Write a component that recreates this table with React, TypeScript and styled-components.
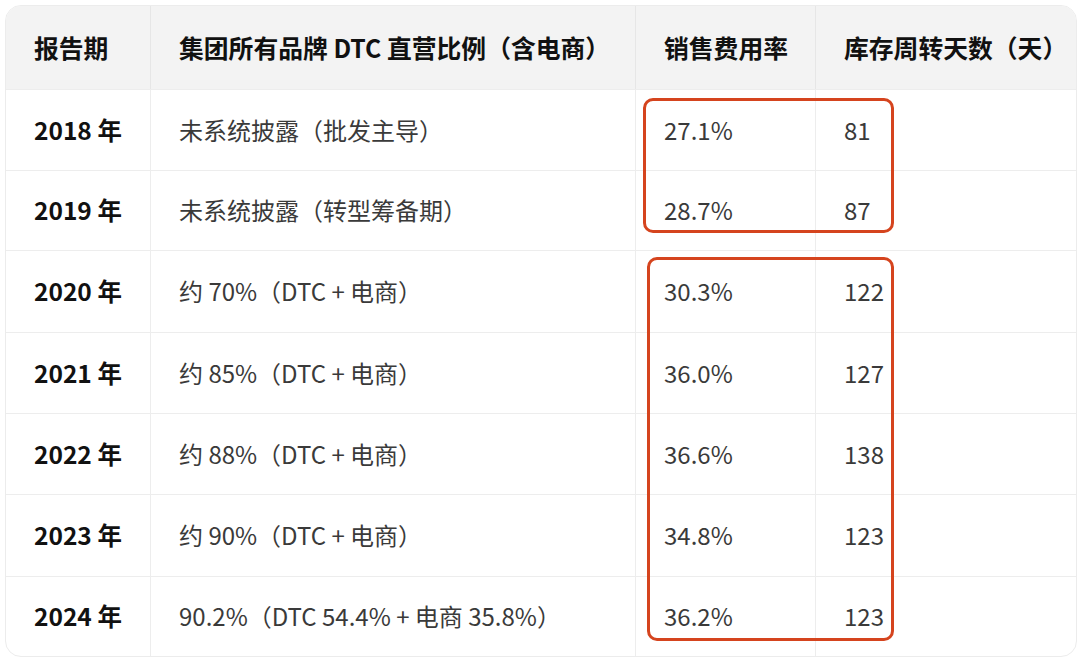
import React from 'react';
import styled, { createGlobalStyle } from 'styled-components';

const GlobalStyle = createGlobalStyle`
  html, body {
    margin: 0;
    padding: 0;
    background: #ffffff;
  }
  body {
    font-family: "Noto Sans CJK SC", "Noto Sans", sans-serif;
  }
`;

const Page = styled.div`
  width: 1080px;
  height: 658px;
  padding: 5px 3px 0 5px;
  box-sizing: border-box;
  overflow: hidden;
`;

const Card = styled.div`
  position: relative;
  border: 1px solid #ececec;
  border-radius: 16px;
  overflow: hidden;
  width: 1072px;
  box-sizing: border-box;
`;

const Grid = styled.div`
  display: grid;
  grid-template-columns: 145px 485px 180px 1fr;
`;

const HeadCell = styled.div<{ $last?: boolean }>`
  height: 83px;
  display: flex;
  align-items: center;
  padding: 0 0 2px 28px;
  box-sizing: border-box;
  background: #f3f3f3;
  border-right: ${({ $last }) => ($last ? 'none' : '1px solid #e6e6e6')};
  font-size: 24.8px;
  font-weight: 700;
  color: #111111;
  white-space: nowrap;
`;

const Cell = styled.div<{ $bold?: boolean; $last?: boolean; $h: number }>`
  height: ${({ $h }) => $h}px;
  display: flex;
  align-items: center;
  padding: 0 0 2px 28px;
  box-sizing: border-box;
  border-top: 1px solid #ededed;
  border-right: ${({ $last }) => ($last ? 'none' : '1px solid #ededed')};
  font-size: ${({ $bold }) => ($bold ? '24.5px' : '24px')};
  font-weight: ${({ $bold }) => ($bold ? 700 : 400)};
  color: ${({ $bold }) => ($bold ? '#111111' : '#3a3a3a')};
  white-space: nowrap;
`;

const Highlight = styled.div`
  position: absolute;
  border: 3px solid #d5441e;
  border-radius: 10px;
  box-sizing: border-box;
  pointer-events: none;
`;

const headers = ['报告期', '集团所有品牌 DTC 直营比例（含电商）', '销售费用率', '库存周转天数（天）'];

const rows: [string, string, string, string][] = [
  ['2018 年', '未系统披露（批发主导）', '27.1%', '81'],
  ['2019 年', '未系统披露（转型筹备期）', '28.7%', '87'],
  ['2020 年', '约 70%（DTC + 电商）', '30.3%', '122'],
  ['2021 年', '约 85%（DTC + 电商）', '36.0%', '127'],
  ['2022 年', '约 88%（DTC + 电商）', '36.6%', '138'],
  ['2023 年', '约 90%（DTC + 电商）', '34.8%', '123'],
  ['2024 年', '90.2%（DTC 54.4% + 电商 35.8%）', '36.2%', '123'],
];

const heights = [81, 80, 82, 81, 81, 82, 80];

const App = () => (
  <>
    <GlobalStyle />
    <Page>
      <Card>
        <Grid>
          {headers.map((h, i) => (
            <HeadCell key={h} $last={i === 3}>
              {h}
            </HeadCell>
          ))}
          {rows.map((r, ri) =>
            r.map((v, ci) => (
              <Cell key={`${ri}-${ci}`} $bold={ci === 0} $last={ci === 3} $h={heights[ri]}>
                {v}
              </Cell>
            ))
          )}
        </Grid>
        <Highlight style={{ left: 637, top: 92, width: 251, height: 135 }} />
        <Highlight style={{ left: 641, top: 251, width: 247, height: 384 }} />
      </Card>
    </Page>
  </>
);

export default App;
